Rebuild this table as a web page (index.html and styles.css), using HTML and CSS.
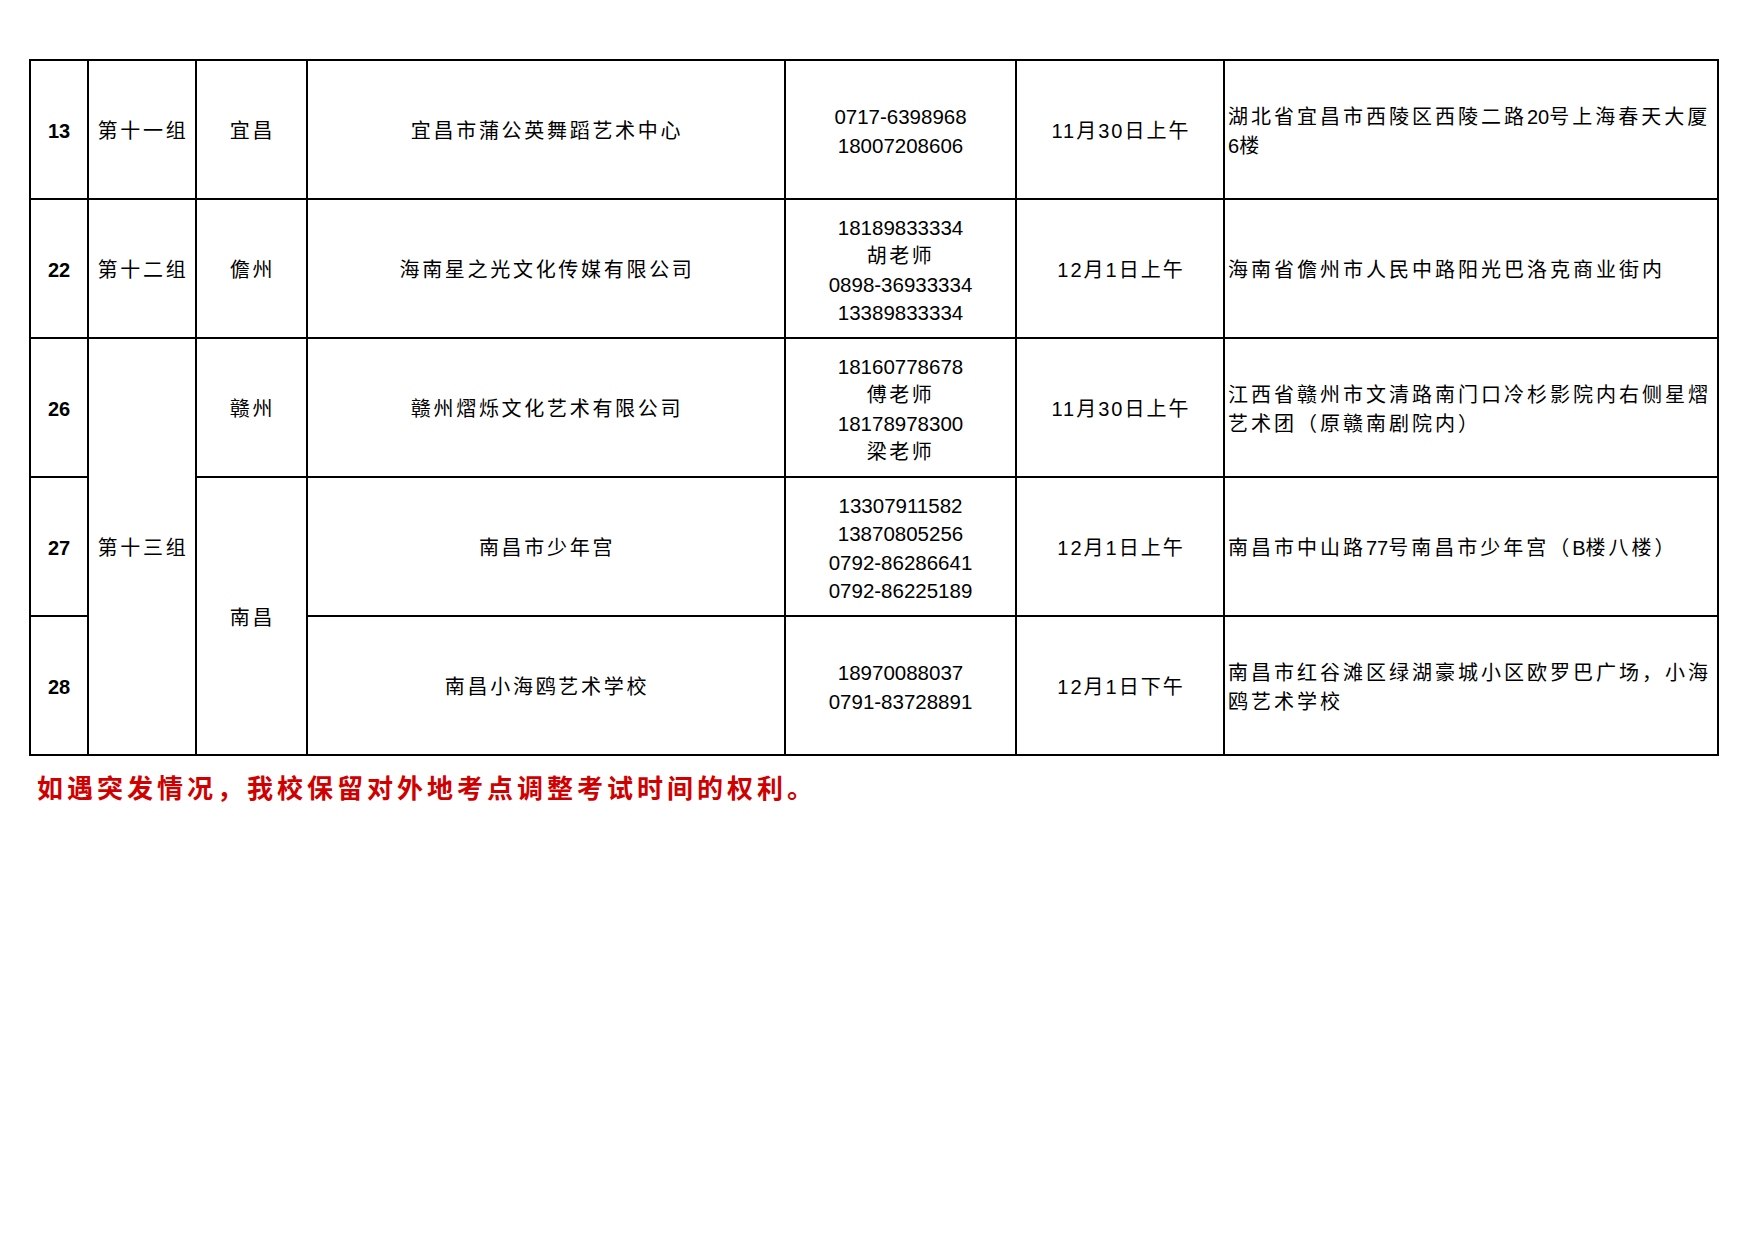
FILE: index.html
```html
<!DOCTYPE html>
<html lang="zh-CN">
<head>
<meta charset="utf-8">
<title>考点安排</title>
<link rel="stylesheet" href="styles.css">
</head>
<body>
<div class="page">
<table class="sched">
  <colgroup>
    <col class="c-no"><col class="c-grp"><col class="c-city"><col class="c-org"><col class="c-tel"><col class="c-time"><col class="c-addr">
  </colgroup>
  <tbody>
    <tr>
      <td class="no">13</td>
      <td class="cn">第十一组</td>
      <td class="cn">宜昌</td>
      <td class="cn">宜昌市蒲公英舞蹈艺术中心</td>
      <td class="tel">0717-6398968<br>18007208606</td>
      <td class="cn time">11月30日上午</td>
      <td class="addr">湖北省宜昌市西陵区西陵二路<span class="d">20</span>号上海春天大厦<br><span class="d">6</span>楼</td>
    </tr>
    <tr>
      <td class="no">22</td>
      <td class="cn">第十二组</td>
      <td class="cn">儋州</td>
      <td class="cn">海南星之光文化传媒有限公司</td>
      <td class="tel">18189833334<br><span class="zh">胡老师</span><br>0898-36933334<br>13389833334</td>
      <td class="cn time">12月1日上午</td>
      <td class="addr">海南省儋州市人民中路阳光巴洛克商业街内</td>
    </tr>
    <tr>
      <td class="no">26</td>
      <td class="cn" rowspan="3">第十三组</td>
      <td class="cn">赣州</td>
      <td class="cn">赣州熠烁文化艺术有限公司</td>
      <td class="tel">18160778678<br><span class="zh">傅老师</span><br>18178978300<br><span class="zh">梁老师</span></td>
      <td class="cn time">11月30日上午</td>
      <td class="addr">江西省赣州市文清路南门口冷杉影院内右侧星熠<br>艺术团（原赣南剧院内）</td>
    </tr>
    <tr>
      <td class="no">27</td>
      <td class="cn" rowspan="2">南昌</td>
      <td class="cn">南昌市少年宫</td>
      <td class="tel">13307911582<br>13870805256<br>0792-86286641<br>0792-86225189</td>
      <td class="cn time">12月1日上午</td>
      <td class="addr">南昌市中山路<span class="d">77</span>号南昌市少年宫（<span class="d">B</span>楼八楼）</td>
    </tr>
    <tr>
      <td class="no">28</td>
      <td class="cn">南昌小海鸥艺术学校</td>
      <td class="tel">18970088037<br>0791-83728891</td>
      <td class="cn time">12月1日下午</td>
      <td class="addr">南昌市红谷滩区绿湖豪城小区欧罗巴广场，小海<br>鸥艺术学校</td>
    </tr>
  </tbody>
</table>
<p class="note">如遇突发情况，我校保留对外地考点调整考试时间的权利。</p>
</div>
</body>
</html>
```

FILE: styles.css
```css
html, body {
  margin: 0;
  padding: 0;
  background: #fff;
}

.page {
  padding: 59px 0 0 29px;
  font-family: "Liberation Sans", "Noto Sans CJK SC", sans-serif;
  color: #000;
}

.sched {
  border-collapse: collapse;
  table-layout: fixed;
  width: 1690px;
}

.c-no { width: 58px; }
.c-grp { width: 108px; }
.c-city { width: 111px; }
.c-org { width: 478px; }
.c-tel { width: 231px; }
.c-time { width: 208px; }
.c-addr { width: 494px; }

.sched tr {
  height: 139px;
}

.sched td {
  border: 2px solid #000;
  padding: 4px 0 0 0;
  vertical-align: middle;
  text-align: center;
  font-size: 20px;
  line-height: 28.4px;
  white-space: nowrap;
}

.sched td.no {
  font-weight: bold;
  font-size: 20px;
}

.sched td.cn {
  letter-spacing: 2.7px;
  padding-left: 2px;
}

.sched td.time {
  letter-spacing: 2px;
}

.sched td.tel {
  letter-spacing: 0;
  font-size: 20.5px;
}

.zh {
  font-size: 20px;
  letter-spacing: 2.5px;
}

.sched td.addr {
  text-align: left;
  padding-left: 3px;
  letter-spacing: 3px;
}

.d {
  letter-spacing: 0;
}

.note {
  margin: 14px 0 0 8px;
  font-family: "Noto Sans CJK SC", sans-serif;
  font-weight: bold;
  font-size: 26px;
  line-height: 34px;
  letter-spacing: 4px;
  color: #d00000;
}
```
